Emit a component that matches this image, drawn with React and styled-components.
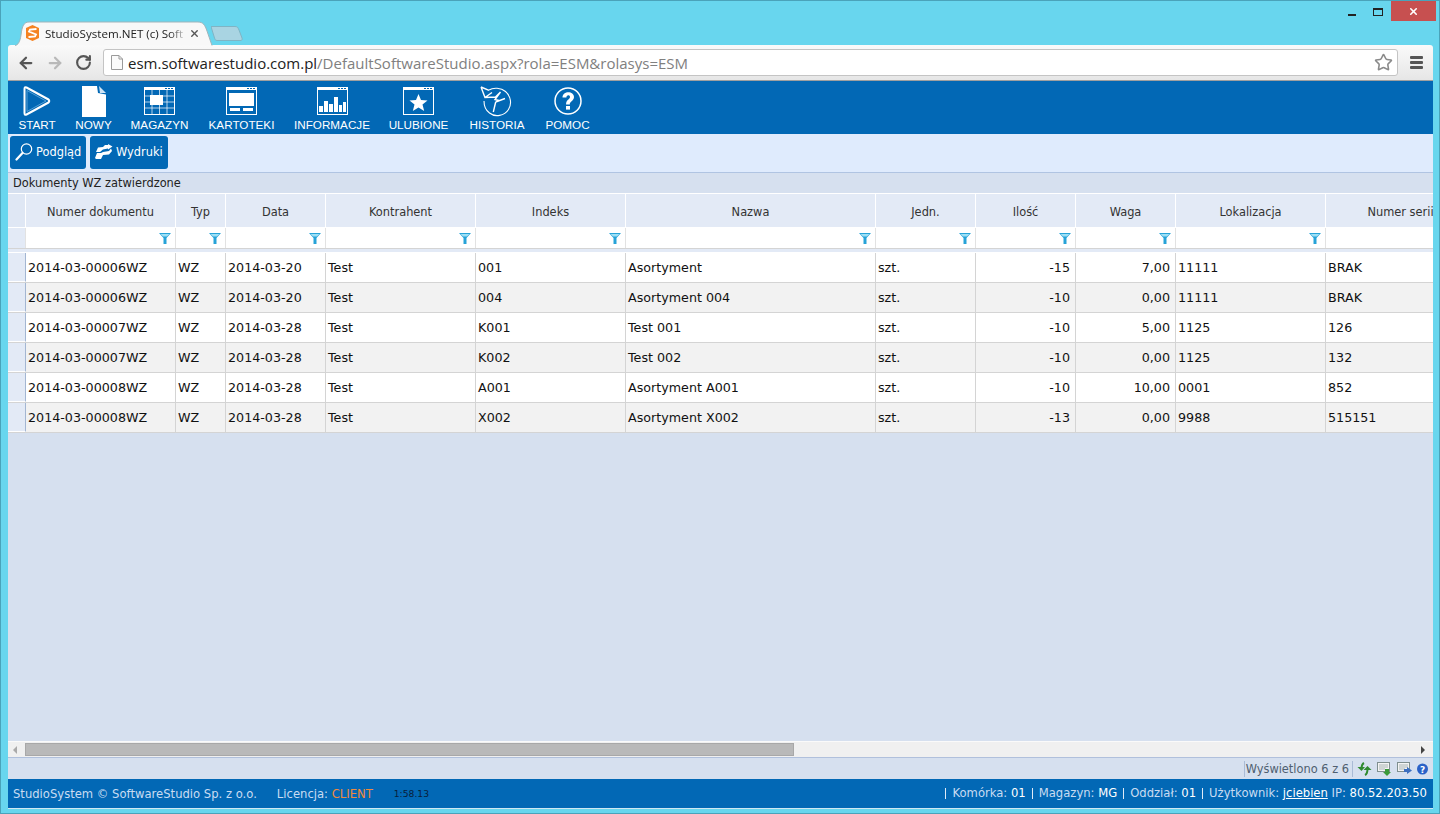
import React from 'react';
import styled, { createGlobalStyle } from 'styled-components';
import { ArrowLeft, ArrowRight, RotateCw, Star, X } from 'lucide-react';

const GlobalStyle = createGlobalStyle`
  html, body {
    margin: 0;
    padding: 0;
    overflow: hidden;
    background: #68d6ee;
  }
`;

const gridColumns = '18px 150px 50px 100px 150px 150px 250px 100px 100px 100px 150px 150px';

const Window = styled.div`
  width: 1440px;
  height: 814px;
  box-sizing: border-box;
  display: flex;
  flex-direction: column;
  background: #68d6ee;
  border: 1px solid #4aa3ba;
  padding: 0 6px 4px 7px;
  font-family: "DejaVu Sans", sans-serif;
`;

const TitleBar = styled.div`
  height: 44px;
  flex: none;
  display: flex;
  justify-content: space-between;
  align-items: flex-start;
`;

const TabStrip = styled.div`
  display: flex;
  align-items: flex-end;
  height: 44px;
  padding-left: 7px;
`;

const ActiveTab = styled.div`
  position: relative;
  width: 198px;
  height: 24px;
  display: flex;
  align-items: center;
  padding: 0 0 0 11px;
  box-sizing: border-box;
  font: 11.6px "Open Sans", sans-serif;
  color: #222;
  z-index: 1;
  svg.shape {
    position: absolute;
    left: 0;
    top: 0;
    z-index: -1;
  }
`;

const TabTitle = styled.span`
  width: 138px;
  margin: 0 6px 0 6px;
  white-space: nowrap;
  -webkit-mask-image: linear-gradient(to right, #000 90%, rgba(0, 0, 0, 0.25));
  mask-image: linear-gradient(to right, #000 90%, rgba(0, 0, 0, 0.25));
`;

const WindowButtons = styled.div`
  display: flex;
  align-items: flex-start;
  margin-right: -3px;
`;

const WinButton = styled.div`
  width: ${({ $close }) => ($close ? '45px' : '26px')};
  height: 20px;
  display: flex;
  align-items: center;
  justify-content: center;
  background: ${({ $close }) => ($close ? '#c75050' : 'transparent')};
`;

const MinimizeGlyph = styled.div`
  width: 8px;
  height: 2px;
  background: #222;
  margin-top: 8px;
`;

const MaximizeGlyph = styled.div`
  width: 8px;
  height: 5px;
  border: 1px solid #222;
  border-top-width: 2px;
  margin-top: 2px;
`;

const Toolbar = styled.div`
  height: 36px;
  flex: none;
  display: flex;
  align-items: center;
  padding: 0 10px 0 9px;
  box-sizing: border-box;
  background: linear-gradient(#fafafa, #e6e6e6);
  border-bottom: 1px solid #a0a0a0;
  border-radius: 3px 3px 0 0;
`;

const NavArrow = styled.div`
  width: ${({ $last }) => ($last ? '28px' : '29px')};
  display: flex;
  justify-content: flex-start;
  color: ${({ $disabled }) => ($disabled ? '#b9b9b9' : '#555')};
`;

const AddressBar = styled.div`
  flex: 1;
  height: 27px;
  display: flex;
  align-items: center;
  gap: 5px;
  padding: 0 4px 0 7px;
  box-sizing: border-box;
  background: #fff;
  border: 1px solid #c4c4c4;
  border-radius: 3px;
  font: 15px "Open Sans", sans-serif;
  color: #222;
`;

const Url = styled.span`
  flex: 1;
  white-space: nowrap;
  span {
    color: #808080;
  }
`;

const Burger = styled.div`
  width: 13px;
  margin-left: 12px;
  display: flex;
  flex-direction: column;
  gap: 2px;
  i {
    display: block;
    height: 3px;
    background: #555;
    border-radius: 1px;
  }
`;

const MainMenu = styled.nav`
  height: 53px;
  flex: none;
  display: flex;
  gap: 20px;
  padding-left: 10px;
  background: #0268b5;
`;

const MenuItem = styled.div`
  width: ${({ $width }) => $width}px;
  height: 53px;
  display: flex;
  flex-direction: column;
  align-items: center;
  justify-content: space-between;
  padding: 4px 0 3px;
  box-sizing: border-box;
  font: 11.7px "Liberation Sans", sans-serif;
  color: #fff;
  white-space: nowrap;
`;

const MenuIcon = styled.div`
  height: 32px;
  display: flex;
  align-items: center;
  justify-content: center;
`;

const ActionBar = styled.div`
  height: 39px;
  flex: none;
  display: flex;
  gap: 4px;
  padding: 2px 0 0 2px;
  box-sizing: border-box;
  background: #dfebfd;
  border-bottom: 1px solid #b0c4e2;
`;

const ActionButton = styled.button`
  height: 33px;
  width: ${({ $width }) => $width}px;
  display: flex;
  align-items: center;
  gap: 3px;
  padding: 0 0 2px 5px;
  border: 0;
  border-radius: 3px;
  background: #0268b5;
  color: #fff;
  font: 11.4px "DejaVu Sans", sans-serif;
`;

const Body = styled.div`
  flex: 1;
  min-height: 0;
  display: flex;
  flex-direction: column;
  background: #d6e0ef;
`;

const SectionTitle = styled.div`
  height: 20px;
  flex: none;
  display: flex;
  align-items: center;
  padding: 0 0 1px 5px;
  box-sizing: border-box;
  font-size: 11.4px;
  color: #222;
`;

const GridArea = styled.div`
  flex: 1;
  min-height: 0;
  overflow: hidden;
`;

const HeaderRow = styled.div`
  display: grid;
  grid-template-columns: ${gridColumns};
  height: 35px;
  box-sizing: border-box;
  border-top: 1px solid #fff;
  border-bottom: 1px solid #fff;
  background: #e3eaf6;
`;

const HeaderCell = styled.div`
  display: flex;
  align-items: center;
  justify-content: center;
  padding-top: 2px;
  white-space: nowrap;
  font-size: 11.4px;
  color: #333;
  border-right: 1px solid #fff;
  &:first-child {
    background: #dfe7f4;
  }
`;

const FilterRow = styled.div`
  display: grid;
  grid-template-columns: ${gridColumns};
  height: 21px;
  box-sizing: border-box;
  background: #fff;
  border-bottom: 1px solid #d4d4d4;
`;

const FilterCell = styled.div`
  display: flex;
  align-items: center;
  justify-content: flex-end;
  padding-right: 4px;
  border-right: 1px solid #e2e2e2;
  &:first-child {
    background: #e3eaf6;
  }
`;

const HeaderGap = styled.div`
  height: 4px;
  background: linear-gradient(#e3eaf6 75%, #fff 75%);
`;

const DataRow = styled.div`
  display: grid;
  grid-template-columns: ${gridColumns};
  height: 30px;
  box-sizing: border-box;
  background: ${({ $even }) => ($even ? '#f2f2f2' : '#fff')};
  border-bottom: 1px solid #d4d4d4;
`;

const RowHead = styled.div`
  background: #e3eaf6;
  border-right: 1px solid #a3b6d2;
  border-bottom: 1px solid #fff;
`;

const Cell = styled.div`
  display: flex;
  align-items: center;
  justify-content: ${({ $right }) => ($right ? 'flex-end' : 'flex-start')};
  padding: 0 ${({ $right }) => ($right ? '5px' : '2px')} 0 2px;
  white-space: nowrap;
  font-size: 12.7px;
  color: #111;
  border-right: 1px solid #d4d4d4;
`;

const ScrollBar = styled.div`
  height: 17px;
  flex: none;
  display: flex;
  align-items: center;
  box-sizing: border-box;
  background: #f0f0f0;
  border-top: 1px solid #fafafa;
  border-bottom: 1px solid #b0c0dc;
`;

const ScrollArrow = styled.div`
  width: 0;
  height: 0;
  border-top: 4px solid transparent;
  border-bottom: 4px solid transparent;
  ${({ $right }) => ($right ? 'border-left: 4px solid #444;' : 'border-right: 4px solid #aaa;')}
  margin: ${({ $right }) => ($right ? '0 8px 0 auto' : '0 0 0 5px')};
`;

const ScrollThumb = styled.div`
  width: 769px;
  height: 13px;
  margin-left: 8px;
  box-sizing: border-box;
  background: #b9b9b9;
  border: 1px solid #a8a8a8;
`;

const StatusBar = styled.div`
  height: 21px;
  flex: none;
  display: flex;
  align-items: center;
  justify-content: flex-end;
  font-size: 11.4px;
  color: #4f5f70;
`;

const StatusText = styled.div`
  height: 16px;
  display: flex;
  align-items: center;
  padding: 0 3px 0 1px;
  margin-right: 4px;
  border-left: 1px solid #a9bbd6;
  border-right: 1px solid #a9bbd6;
`;

const StatusIcons = styled.div`
  display: flex;
  gap: 5px;
  padding-right: 5px;
  align-items: center;
`;

const Footer = styled.footer`
  height: 30px;
  flex: none;
  display: flex;
  align-items: center;
  padding: 0 6px 0 5px;
  box-sizing: border-box;
  background: #0268b5;
  color: #c9dcf2;
  font-size: 11.6px;
  white-space: nowrap;
  border-bottom: 1px solid #cfe8f2;
`;

const Licence = styled.span`
  margin-left: 20px;
  b {
    font-weight: normal;
    color: #f08a3c;
  }
`;

const Clock = styled.span`
  margin-left: 21px;
  font-size: 9.2px;
  color: #08203a;
`;

const FooterRight = styled.div`
  margin-left: auto;
  display: flex;
  gap: 6px;
  align-items: center;
`;

const FooterItem = styled.span`
  padding-left: 6px;
  border-left: 1px solid #dfeaf7;
  line-height: 11px;
  b {
    color: #fff;
    font-weight: normal;
  }
  a {
    color: #fff;
    text-decoration: underline;
  }
`;

const columns = [
  ['Numer dokumentu', true],
  ['Typ', true],
  ['Data', true],
  ['Kontrahent', true],
  ['Indeks', true],
  ['Nazwa', true],
  ['Jedn.', true],
  ['Ilość', true],
  ['Waga', true],
  ['Lokalizacja', true],
  ['Numer serii', false]
];

const rows = [
  ['2014-03-00006WZ', 'WZ', '2014-03-20', 'Test', '001', 'Asortyment', 'szt.', '-15', '7,00', '11111', 'BRAK'],
  ['2014-03-00006WZ', 'WZ', '2014-03-20', 'Test', '004', 'Asortyment 004', 'szt.', '-10', '0,00', '11111', 'BRAK'],
  ['2014-03-00007WZ', 'WZ', '2014-03-28', 'Test', 'K001', 'Test 001', 'szt.', '-10', '5,00', '1125', '126'],
  ['2014-03-00007WZ', 'WZ', '2014-03-28', 'Test', 'K002', 'Test 002', 'szt.', '-10', '0,00', '1125', '132'],
  ['2014-03-00008WZ', 'WZ', '2014-03-28', 'Test', 'A001', 'Asortyment A001', 'szt.', '-10', '10,00', '0001', '852'],
  ['2014-03-00008WZ', 'WZ', '2014-03-28', 'Test', 'X002', 'Asortyment X002', 'szt.', '-13', '0,00', '9988', '515151']
];

const TabShape = () => (
  <svg className="shape" width="198" height="25" viewBox="0 0 198 25">
    <path d="M0 24.5 C3 24 5 21 6 14 C7 5 9 1 14 1 L183 1 C188 1 190 4 192 10 L197 24.5" fill="#f8f8f8" stroke="#9fb4ba" />
  </svg>
);

const BackTab = () => (
  <svg width="32" height="15" viewBox="0 0 32 15" style={{ marginLeft: -2, marginBottom: 4 }}>
    <path d="M0 .5 H24 C27 .5 27 2 28 4 L31 12 C31.5 13 31 14.5 30 14.5 H6 C4 14.5 4 13 3.5 12 Z" fill="#a9d4e2" stroke="#7fb4c4" />
  </svg>
);

const Favicon = () => (
  <svg width="13" height="16" viewBox="0 0 13 16">
    <path d="M6.5 0 L13 3 V13 L6.5 16 L0 13 V3 Z" fill="#f58220" />
    <path d="M10.5 4 L4 4.5 L3 6.5 L10 9.5 L9 11.5 L2.5 12" fill="none" stroke="#fff" strokeWidth="1.8" />
  </svg>
);

const PageIcon = () => (
  <svg width="12" height="15" viewBox="0 0 12 15">
    <path d="M.5 .5 H8 L11.5 4 V14.5 H.5 Z M8 .5 V4 H11.5" fill="#fafafa" stroke="#9a9a9a" />
  </svg>
);

const PlayIcon = () => (
  <svg width="28" height="32" viewBox="0 0 28 32">
    <path d="M3.5 2.5 L25.5 14.5 Q27 16 25.5 17.5 L3.5 29.5 Q1.5 30.5 1.5 28 V4 Q1.5 1.5 3.5 2.5 Z" fill="#0268b5" stroke="#fff" strokeWidth="2" strokeLinejoin="round" />
    <path d="M4 5.5 L23 16 L4 26.5 Z" fill="none" stroke="#6aaede" strokeWidth=".8" />
  </svg>
);

const DocIcon = () => (
  <svg width="24" height="31" viewBox="0 0 24 31">
    <path d="M0 0 H15 L16 7 L24 8.5 V31 H0 Z" fill="#fff" />
    <path d="M17 0 L24 7 H18 Z" fill="#cfe4f5" />
  </svg>
);

const WindowFrame = ({ children }) => (
  <svg width="31" height="28" viewBox="0 0 31 28">
    <rect x=".5" y=".5" width="30" height="27" fill="none" stroke="#fff" />
    <rect x="0" y="0" width="31" height="3" fill="#fff" />
    <rect x="21" y="1" width="2" height="1" fill="#0268b5" />
    <rect x="24" y="1" width="2" height="1" fill="#0268b5" />
    <rect x="27" y="1" width="2" height="1" fill="#0268b5" />
    {children}
  </svg>
);

const GridIcon = () => (
  <WindowFrame>
    <path d="M8 3 V28 M15.5 3 V28 M23 3 V28 M1 9 H30 M1 15 H30 M1 21 H30" stroke="#fff" strokeWidth=".7" />
    <rect x="6" y="8" width="13" height="10" fill="#fff" />
  </WindowFrame>
);

const CardIcon = () => (
  <WindowFrame>
    <rect x="3" y="6" width="25" height="13" fill="#fff" />
    <rect x="4" y="21" width="10" height="3" fill="#fff" />
    <rect x="17" y="21" width="10" height="3" fill="#fff" />
  </WindowFrame>
);

const ChartIcon = () => (
  <WindowFrame>
    <path d="M2 25 V19 H6 V25 H7 V14 H11 V25 H12 V17 H16 V25 H17 V10 H21 V25 H22 V18 H25 V25 H26 V15 H29 V25 Z" fill="#fff" />
  </WindowFrame>
);

const StarIcon = () => (
  <WindowFrame>
    <path d="M15.5 7 L18 13 L24.5 13.4 L19.5 17.5 L21.2 24 L15.5 20.4 L9.8 24 L11.5 17.5 L6.5 13.4 L13 13 Z" fill="#fff" />
  </WindowFrame>
);

const HistoryIcon = () => (
  <svg width="34" height="32" viewBox="0 0 34 32" fill="none" stroke="#fff" strokeWidth="1.1">
    <path d="M9 5 C13 2.5 21 2.5 25.5 6.5 C31 11.5 32 19 28.5 24.5 C24.5 31 15 32.5 9.5 28 C6 25.5 4 21 4 16" />
    <path d="M1 2 L5 12.5 L15.5 12 L20.5 7 M1 2 L9 5.3 M12 7.5 L5 12.5 M20.5 7 L15 14.5 L19 15.5 M15.7 17 L13.3 27 M15.7 17 L25 13.5" strokeWidth="1.4" />
  </svg>
);

const HelpIcon = () => (
  <svg width="28" height="28" viewBox="0 0 28 28">
    <circle cx="14" cy="14" r="13" fill="none" stroke="#fff" strokeWidth="1.5" />
    <path d="M8.5 10.5 C8.5 3.5 20 3.5 20 10 C20 14 15.8 14 15.8 17.5 H12 C12 12.5 16 12.5 16 10 C16 7.6 12.4 7.8 12.4 10.5 Z" fill="#fff" />
    <rect x="12" y="19" width="4" height="3.6" fill="#fff" />
  </svg>
);

const LensIcon = () => (
  <svg width="18" height="20" viewBox="0 0 18 20" fill="none" stroke="#fff">
    <circle cx="11.5" cy="7" r="5.2" strokeWidth="1.2" />
    <path d="M7.5 11 L1.5 17.5" strokeWidth="2.2" strokeLinecap="round" />
  </svg>
);

const PrintsIcon = () => (
  <svg width="18" height="15" viewBox="0 0 18 15" fill="#fff">
    <path d="M1 8 L3 3.5 L8 3 L10 1 H13 V0 L17.5 2.5 L13 5.5 V4.5 L8 5.5 L5 8 Z" />
    <path d="M0 14 L2 9 H6 L8 8 L14 7 L16 4.5 L17 7 L14 10.5 L8 11 L6 15 H1 Z" />
  </svg>
);

const FilterIcon = () => (
  <svg width="12" height="11" viewBox="0 0 12 11">
    <path d="M0 0 H12 L7.5 5 V11 H4.5 V5 Z" fill="#27a3d8" />
    <path d="M1.5 1 H10.5 L8 3.5 H4 Z" fill="#9fe0f5" />
  </svg>
);

const RefreshIcon = () => (
  <svg width="15" height="14" viewBox="0 0 15 14" fill="none" stroke="#2f8a2f" strokeWidth="2">
    <path d="M7 1 C5 2 4.5 4 4.5 7" />
    <path d="M0.5 5 L4.5 9 L8 5" fill="#2f8a2f" stroke="none" />
    <path d="M8 13 C10 12 10.5 10 10.5 7" />
    <path d="M6.5 8 L10.5 4 L14.5 8" fill="#2f8a2f" stroke="none" />
  </svg>
);

const ExportIcon = ({ arrow }) => (
  <svg width="15" height="14" viewBox="0 0 15 14">
    <rect x=".5" y=".5" width="12" height="9" fill="#f4f4f4" stroke="#7f8f8f" />
    <path d="M2 3 H11 M2 5 H11 M2 7 H8" stroke="#a9b4b4" />
    {arrow
      ? <path d="M7 7 H10 V5 L15 8.5 L10 12 V10 H7 Z" fill="#3c6fc0" />
      : <path d="M8 7 H12 V10 H14 L10 14 L6 10 H8 Z" fill="#3a9a3a" />}
  </svg>
);

const InfoIcon = () => (
  <svg width="11" height="12" viewBox="0 0 11 12">
    <circle cx="5.5" cy="6" r="5.5" fill="#2a62c8" />
    <text x="5.5" y="9.5" textAnchor="middle" fill="#fff" fontSize="9" fontWeight="bold" fontFamily="DejaVu Sans">?</text>
  </svg>
);

const menu = [
  ['START', 38, <PlayIcon />],
  ['NOWY', 35, <DocIcon />],
  ['MAGAZYN', 57, <GridIcon />],
  ['KARTOTEKI', 67, <CardIcon />],
  ['INFORMACJE', 74, <ChartIcon />],
  ['ULUBIONE', 59, <StarIcon />],
  ['HISTORIA', 58, <HistoryIcon />],
  ['POMOC', 43, <HelpIcon />]
];

const App = () => (
  <Window>
    <GlobalStyle />
    <TitleBar>
      <TabStrip>
        <ActiveTab>
          <TabShape />
          <Favicon />
          <TabTitle>StudioSystem.NET (c) Soft</TabTitle>
          <X size={11} strokeWidth={3} color="#555" />
        </ActiveTab>
        <BackTab />
      </TabStrip>
      <WindowButtons>
        <WinButton><MinimizeGlyph /></WinButton>
        <WinButton><MaximizeGlyph /></WinButton>
        <WinButton $close><X size={11} strokeWidth={3.5} color="#fff" /></WinButton>
      </WindowButtons>
    </TitleBar>
    <Toolbar>
      <NavArrow><ArrowLeft size={18} strokeWidth={3} /></NavArrow>
      <NavArrow $disabled><ArrowRight size={18} strokeWidth={3} /></NavArrow>
      <NavArrow $last><RotateCw size={17} strokeWidth={3} /></NavArrow>
      <AddressBar>
        <PageIcon />
        <Url>esm.softwarestudio.com.pl<span>/DefaultSoftwareStudio.aspx?rola=ESM&amp;rolasys=ESM</span></Url>
        <Star size={19} color="#8a8a8a" />
      </AddressBar>
      <Burger><i /><i /><i /></Burger>
    </Toolbar>
    <MainMenu>
      {menu.map(([label, width, icon]) => (
        <MenuItem key={label} $width={width}>
          <MenuIcon>{icon}</MenuIcon>
          <span>{label}</span>
        </MenuItem>
      ))}
    </MainMenu>
    <ActionBar>
      <ActionButton $width={76}><LensIcon />Podgląd</ActionButton>
      <ActionButton $width={78}><PrintsIcon />Wydruki</ActionButton>
    </ActionBar>
    <Body>
      <SectionTitle>Dokumenty WZ zatwierdzone</SectionTitle>
      <GridArea>
        <HeaderRow>
          <HeaderCell />
          {columns.map(([title]) => <HeaderCell key={title}>{title}</HeaderCell>)}
        </HeaderRow>
        <FilterRow>
          <FilterCell />
          {columns.map(([title, filtered]) => (
            <FilterCell key={title}>{filtered && <FilterIcon />}</FilterCell>
          ))}
        </FilterRow>
        <HeaderGap />
        {rows.map((row, i) => (
          <DataRow key={i} $even={i % 2 === 1}>
            <RowHead />
            {row.map((value, j) => <Cell key={j} $right={j === 7 || j === 8}>{value}</Cell>)}
          </DataRow>
        ))}
      </GridArea>
      <ScrollBar>
        <ScrollArrow />
        <ScrollThumb />
        <ScrollArrow $right />
      </ScrollBar>
      <StatusBar>
        <StatusText>Wyświetlono 6 z 6</StatusText>
        <StatusIcons>
          <RefreshIcon />
          <ExportIcon />
          <ExportIcon arrow />
          <InfoIcon />
        </StatusIcons>
      </StatusBar>
    </Body>
    <Footer>
      StudioSystem © SoftwareStudio Sp. z o.o.
      <Licence>Licencja: <b>CLIENT</b></Licence>
      <Clock>1:58.13</Clock>
      <FooterRight>
        <FooterItem>Komórka: <b>01</b></FooterItem>
        <FooterItem>Magazyn: <b>MG</b></FooterItem>
        <FooterItem>Oddział: <b>01</b></FooterItem>
        <FooterItem>Użytkownik: <a>jciebien</a> IP: <b>80.52.203.50</b></FooterItem>
      </FooterRight>
    </Footer>
  </Window>
);

export default App;
